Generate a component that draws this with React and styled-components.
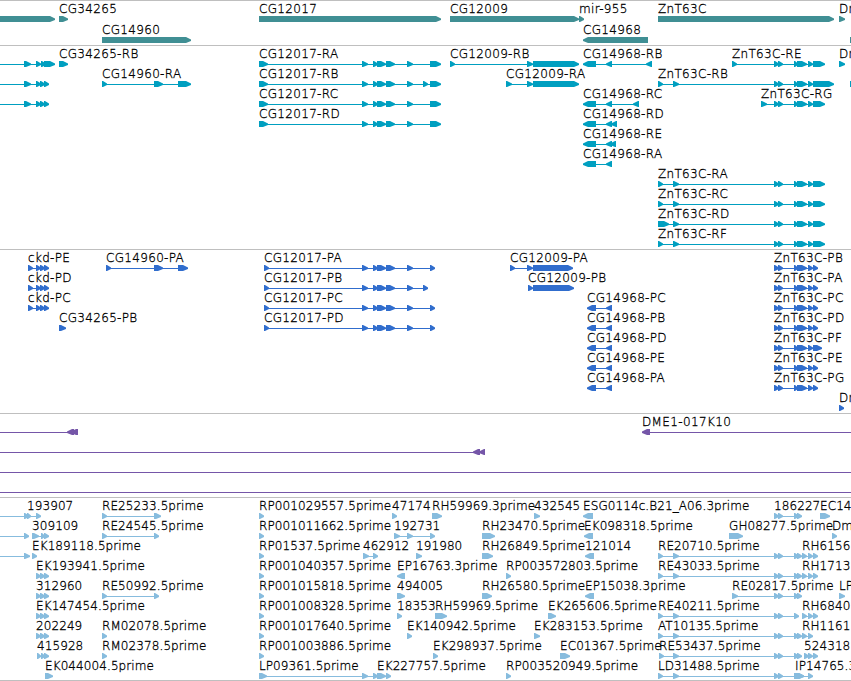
import styled, { createGlobalStyle } from "styled-components";

const GlobalStyle = createGlobalStyle`
  body {
    margin: 0;
    background: #fff;
  }
`;

const Browser = styled.main`
  width: 851px;
  height: 681px;
  overflow: hidden;
  background: #fff;
  color: #000;
  font-family: "DejaVu Sans", sans-serif;
  font-size: 12px;
  font-weight: 200;
`;

const TrackBox = styled.section`
  display: flex;
  flex-direction: column;
  box-sizing: border-box;
  padding: 1px 0 ${(props) => props.$bottom}px;
  border-top: 1px solid #bfbfbf;
  border-bottom: ${(props) => (props.$last ? "1px solid #bfbfbf" : "none")};
  color: ${(props) => props.$color};
`;

const Row = styled.div`
  position: relative;
  height: ${(props) => props.$height}px;
`;

const Glyphs = styled.svg`
  display: block;
  width: 851px;
  height: 20px;
`;

// a label sits on the map at the start of its feature
const Label = styled.span`
  position: absolute;
  top: 0;
  left: ${(props) => props.$x}px;
  line-height: 14px;
  letter-spacing: ${(props) => props.$spacing}px;
  white-space: pre;
  color: #000;
  -webkit-text-stroke: 0.3px #000;
`;

const fwd = (name, ...exons) => ({ name, exons });
const rev = (name, ...exons) => ({ name, exons, reverse: true });
const span = (from, to, ...exons) => ({ from, to, exons, reverse: true });

// exons shared by several transcripts
const ckd = [[36, 41], [40, 45], [44, 49]];
const cg12017 = [[362, 368], [373, 378], [377, 386], [386, 395], [407, 413]];
const znt = [[774, 779], [778, 783], [794, 798], [797, 807], [808, 813]];
const zntRna = [...znt, [813, 825]];
const zntCds = [...znt, [813, 818]];
const zntStart = [[658, 663], [673, 679]];
const zntRead = [[774, 779], [778, 783], [794, 799], [797, 802]];
const readEnd = [[802, 807], [808, 813], [813, 818]];

const genes = [
  [
    fwd("", [-10, 55]),
    fwd("CG34265", [59, 68]),
    fwd("CG12017", [259, 441]),
    fwd("CG12009", [450, 579]),
    fwd("mir-955", [579, 584]),
    fwd("ZnT63C", [658, 834]),
    fwd("Dm", [839, 845]),
  ],
  [
    fwd("CG14960", [102, 191]),
    rev("CG14968", [583, 648]),
    fwd("", [850, 870]),
  ],
];

const transcripts = [
  [
    fwd("", [-10, -5], [24, 31], [36, 41], [41, 46], [44, 55]),
    fwd("CG34265-RB", [59, 68]),
    fwd("CG12017-RA", [259, 268], ...cg12017, [430, 441]),
    fwd("CG12009-RB", [450, 455], [527, 533], [533, 579]),
    rev("CG14968-RB", [583, 596], [606, 612], [646, 652]),
    fwd("ZnT63C-RE", [732, 737], ...zntRna),
    fwd("Dm", [839, 845]),
  ],
  [
    fwd("", [-10, -5], [24, 31], ...ckd),
    fwd("CG14960-RA", [102, 107], [154, 163], [178, 191]),
    fwd("CG12017-RB", [259, 268], ...cg12017, [423, 428], [430, 441]),
    fwd("CG12009-RA", [506, 512], [527, 533], [533, 579]),
    fwd("ZnT63C-RB", ...zntStart, ...znt, [813, 834]),
    fwd("", [850, 870]),
  ],
  [
    fwd("", [-10, -5], [24, 31], ...ckd),
    fwd("CG12017-RC", [259, 268], ...cg12017, [430, 441]),
    rev("CG14968-RC", [583, 596], [606, 612], [633, 639]),
    fwd("ZnT63C-RG", [761, 767], ...zntRna),
  ],
  [
    fwd("CG12017-RD", [259, 268], ...cg12017, [430, 441]),
    rev("CG14968-RD", [583, 596], [606, 612], [611, 617]),
  ],
  [rev("CG14968-RE", [583, 596], [606, 612], [610, 616])],
  [rev("CG14968-RA", [583, 596], [606, 612])],
  [fwd("ZnT63C-RA", ...zntStart, ...zntRna)],
  [fwd("ZnT63C-RC", ...zntStart, ...zntRna)],
  [fwd("ZnT63C-RD", [658, 669], [673, 679], ...zntRna)],
  [fwd("ZnT63C-RF", ...zntStart, ...zntRna)],
];

const proteins = [
  [
    fwd("ckd-PE", [28, 33], ...ckd),
    fwd("CG14960-PA", [106, 111], [154, 163], [178, 188]),
    fwd("CG12017-PA", [264, 269], ...cg12017, [430, 435]),
    fwd("CG12009-PA", [510, 515], [527, 533], [533, 573]),
    fwd("ZnT63C-PB", ...zntCds),
  ],
  [
    fwd("ckd-PD", [28, 33], ...ckd),
    fwd("CG12017-PB", [264, 269], ...cg12017, [423, 428]),
    fwd("CG12009-PB", [528, 533], [533, 574]),
    fwd("ZnT63C-PA", ...zntCds),
  ],
  [
    fwd("ckd-PC", [28, 33], ...ckd),
    fwd("CG12017-PC", [264, 269], ...cg12017, [430, 435]),
    rev("CG14968-PC", [587, 596], [606, 612]),
    fwd("ZnT63C-PC", ...zntCds),
  ],
  [
    fwd("CG34265-PB", [59, 66]),
    fwd("CG12017-PD", [264, 269], ...cg12017, [430, 435]),
    rev("CG14968-PB", [587, 596], [606, 612]),
    fwd("ZnT63C-PD", ...zntCds),
  ],
  [
    rev("CG14968-PD", [587, 596], [606, 612]),
    fwd("ZnT63C-PF", ...znt, [813, 822]),
  ],
  [
    rev("CG14968-PE", [587, 596], [606, 612]),
    fwd("ZnT63C-PE", ...zntCds),
  ],
  [
    rev("CG14968-PA", [587, 596], [606, 612]),
    fwd("ZnT63C-PG", ...zntCds),
  ],
  [fwd("Dm", [839, 844])],
];

const clones = [
  [
    span(0, 78, [67, 74], [71, 78]),
    { ...span(642, 851, [642, 650]), name: "DME1-017K10" },
  ],
  [span(0, 485, [473, 480], [479, 485])],
  [span(0, 851)],
  [span(0, 851)],
];

const reads = [
  [
    fwd("", [-10, -5], [24, 29]),
    fwd("193907", [27, 31], [36, 41]),
    fwd("RE25233.5prime", [102, 107], [154, 161]),
    fwd("RP001029557.5prime", [259, 264]),
    fwd("47174", [392, 397]),
    fwd("RH59969.3prime", [432, 442]),
    fwd("432545", [534, 540]),
    rev("ESG0114c.B21_A06.3prime", [583, 593]),
    fwd("186227", ...zntRead),
    fwd("EC14", [820, 830]),
  ],
  [
    fwd("", [-10, -5], [24, 29]),
    fwd("309109", [32, 39], [41, 45], [44, 49]),
    fwd("RE24545.5prime", [102, 107], [154, 159]),
    fwd("RP001011662.5prime", [259, 264]),
    fwd("192731", [394, 400], [407, 413], [430, 435]),
    fwd("RH23470.5prime", [482, 495]),
    rev("EK098318.5prime", [584, 593]),
    fwd("GH08277.5prime", [729, 743]),
    fwd("Dm", [832, 837]),
  ],
  [
    fwd("", [-10, -5], [24, 30]),
    fwd("EK189118.5prime", [32, 37]),
    fwd("RP01537.5prime", [259, 264]),
    fwd("462912", [363, 369], [373, 378]),
    fwd("191980", [416, 422]),
    fwd("RH26849.5prime", [482, 493]),
    rev("121014", [585, 594]),
    fwd("RE20710.5prime", ...zntStart, ...zntRead),
    fwd("RH6156", ...readEnd),
  ],
  [
    fwd("EK193941.5prime", ...ckd),
    fwd("RP001040357.5prime", [259, 264]),
    rev("EP16763.3prime", [397, 405]),
    fwd("RP003572803.5prime", [506, 511]),
    fwd("RE43033.5prime", ...zntStart, ...zntRead),
    fwd("RH1713", ...readEnd),
  ],
  [
    fwd("312960", ...ckd),
    fwd("RE50992.5prime", [102, 107], [154, 159]),
    fwd("RP001015818.5prime", [259, 264]),
    fwd("494005", [397, 405]),
    fwd("RH26580.5prime", [482, 492]),
    rev("EP15038.3prime", [585, 594]),
    fwd("RE02817.5prime", [732, 738], ...zntRead),
    fwd("LP", [839, 845]),
  ],
  [
    fwd("EK147454.5prime", ...ckd),
    fwd("RP001008328.5prime", [259, 264]),
    fwd("18353", [397, 402]),
    fwd("RH59969.5prime", [435, 447]),
    fwd("EK265606.5prime", [548, 556]),
    fwd("RE40211.5prime", ...zntStart, ...zntRead.slice(0, 3)),
    fwd("RH6840", ...readEnd),
  ],
  [
    fwd("202249", ...ckd),
    fwd("RM02078.5prime", [102, 107]),
    fwd("RP001017640.5prime", [259, 264]),
    fwd("EK140942.5prime", [407, 412]),
    fwd("EK283153.5prime", [534, 540]),
    fwd("AT10135.5prime", ...zntStart, ...zntRead),
    fwd("RH1161", ...readEnd.slice(0, 2)),
  ],
  [
    fwd("415928", [37, 41], [41, 45], [44, 49]),
    fwd("RM02378.5prime", [102, 107]),
    fwd("RP001003886.5prime", [259, 264]),
    fwd("EK298937.5prime", [433, 438]),
    fwd("EC01367.5prime", [560, 570]),
    fwd("RE53437.5prime", [659, 664], [673, 679], ...zntRead),
    fwd("524318", [804, 809], [808, 813], [813, 818]),
  ],
  [
    fwd("EK044004.5prime", [45, 53]),
    fwd("LP09361.5prime", [259, 267], [362, 368], [373, 378]),
    fwd("EK227757.5prime", [377, 386], [386, 391]),
    fwd("RP003520949.5prime", [506, 511]),
    fwd("LD31488.5prime", ...zntStart, [774, 779], [778, 783], [794, 804]),
    fwd("IP14765.3", [795, 804], [808, 813]),
  ],
];

const tracks = [
  { id: "genes", rows: genes, color: "#408f94", height: 21, spacing: 0.32 },
  { id: "transcripts", rows: transcripts, color: "#009fc0", spacing: 0.32 },
  { id: "proteins", rows: proteins, color: "#306dcd", spacing: 0.32 },
  { id: "clones", rows: clones, color: "#7556a8", spacing: 0.38 },
  { id: "reads", rows: reads, color: "#87bcde", spacing: 0.09 },
];

const Exon = ({ from, to, reverse }) => {
  const tip = Math.min(to - from, 6) - 1;
  const d = reverse
    ? `M${to} 14V20H${from + tip}L${from} 18V16.5L${from + tip} 14Z`
    : `M${from} 14V20H${to - tip}L${to} 18V16.5L${to - tip} 14Z`;
  return <path d={d} fill="currentColor" />;
};

const Feature = ({ exons, reverse, from, to }) => {
  const start = from ?? exons[0][0];
  const end = to ?? exons[exons.length - 1][1];
  return (
    <g>
      <rect x={start} y="17" width={end - start} height="1" fill="currentColor" />
      {exons.map(([a, b]) => (
        <Exon key={a} from={a} to={b} reverse={reverse} />
      ))}
    </g>
  );
};

const Track = ({ rows, color, height = 20, spacing, last }) => (
  <TrackBox $color={color} $last={last} $bottom={last || height > 20 ? 1 : 2}>
    {rows.map((features, i) => (
      <Row key={i} $height={height}>
        <Glyphs viewBox="0 0 851 20">
          {features.map((f, n) => (
            <Feature key={n} {...f} />
          ))}
        </Glyphs>
        {features
          .filter((f) => f.name)
          .map((f) => (
            <Label key={f.name} $x={f.exons[0][0]} $spacing={spacing}>
              {f.name}
            </Label>
          ))}
      </Row>
    ))}
  </TrackBox>
);

const App = () => {
  return (
    <>
      <GlobalStyle />
      <Browser>
        {tracks.map(({ id, ...track }, i) => (
          <Track key={id} {...track} last={i === tracks.length - 1} />
        ))}
      </Browser>
    </>
  );
};

export default App;
